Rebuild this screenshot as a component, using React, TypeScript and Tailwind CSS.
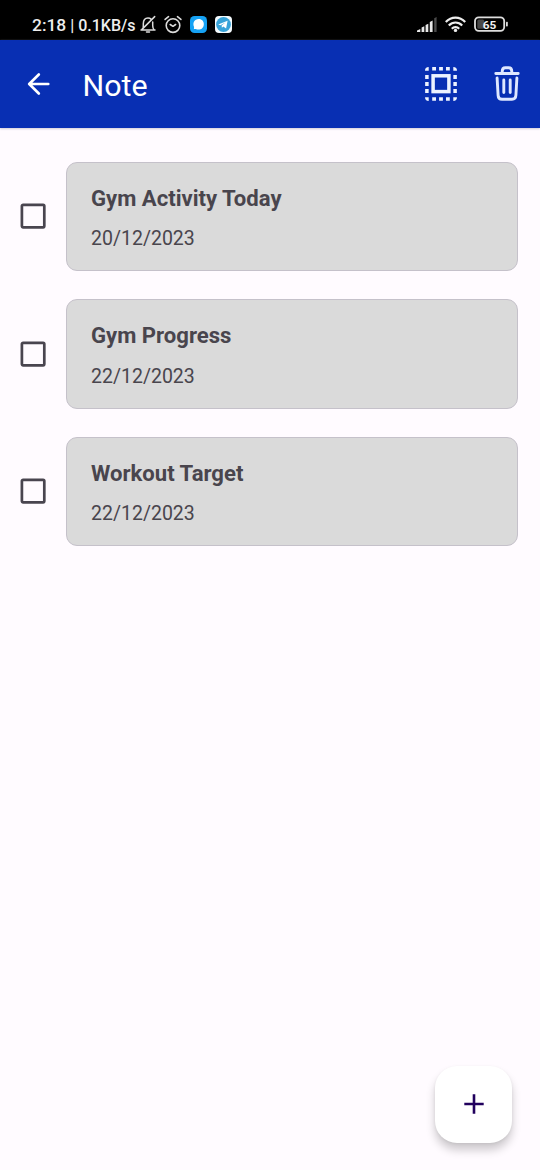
import React from "react";

const notes = [
  { title: "Gym Activity Today", date: "20/12/2023" },
  { title: "Gym Progress", date: "22/12/2023" },
  { title: "Workout Target", date: "22/12/2023" },
];

function MutedBell() {
  return (
    <svg className="ml-[5px] h-5 w-4 shrink-0" viewBox="0 0 16 20" fill="none" stroke="#dcdcdc" strokeWidth="1.5" strokeLinecap="round" strokeLinejoin="round">
      <path d="M1 16H15M2.3 16C3.6 14.6 3.3 12.8 3.3 10C3.3 6.3 5.1 4 8 4C9.3 4 10.3 4.4 11 5.1M12.7 8V11.6C12.7 13.9 13 14.9 14.2 16M6.5 18H9.5M14.7 2.6L2 15.4" />
    </svg>
  );
}

function AlarmClock() {
  return (
    <svg className="ml-2 h-5 w-[18px] shrink-0" viewBox="0 0 18 20" fill="none" stroke="#dcdcdc" strokeWidth="1.6" strokeLinecap="round" strokeLinejoin="round">
      <circle cx="9" cy="11.6" r="6.8" />
      <path d="M1.1 5.4L4.5 2.7M13.5 2.7L16.9 5.4M6.2 10.5L9 12.3L11.6 10.5" />
    </svg>
  );
}

function ChatBadge() {
  return (
    <svg className="ml-[7.5px] mt-px h-[17px] w-[17px] shrink-0" viewBox="0 0 17 17">
      <rect width="17" height="17" rx="4.5" fill="#16a2f4" />
      <path d="M8.7 3C12 3 14 5.5 13.8 8.4C13.6 11.6 11.4 13.6 8.5 13.6C7.4 13.6 6.6 13.4 5.9 12.9L3.9 13.1L4.1 11C2.2 7 4.4 3 8.7 3Z" fill="#fff" />
    </svg>
  );
}

function TelegramBadge() {
  return (
    <svg className="ml-2 mt-px h-[17px] w-[17px] shrink-0" viewBox="0 0 17 17">
      <rect width="17" height="17" rx="4" fill="#f4fafd" />
      <circle cx="8.5" cy="8.5" r="7.4" fill="#36a3d9" />
      <path d="M3.2 8.4L12.6 4.7L11.1 12.4L8.3 10.5L6.9 11.8L6.6 9.5L10.7 6.2L5.5 9.2Z" fill="#fff" />
    </svg>
  );
}

function Signal() {
  return (
    <svg className="h-5 w-5 shrink-0" viewBox="0 0 20 20">
      <path d="M0 16.4L3.3 14.9V18H0ZM4.6 13.6L7.3 12.3V18H4.6ZM8.6 11L11.3 9.7V18H8.6ZM12.8 8L15.6 6.6V18H12.8Z" fill="#e8e8e8" />
      <path d="M17.2 4.2L19.6 3V18H17.2Z" fill="#4b4b4b" />
    </svg>
  );
}

function Wifi() {
  return (
    <svg className="ml-2 h-5 w-[21px] shrink-0" viewBox="0 0 21 20" fill="none" stroke="#eee" strokeWidth="2.2">
      <path d="M.8 8C6.3 2.1 14.7 2.1 20.2 8M3.8 11.5C7.7 7.5 13.3 7.5 17.2 11.5M6.8 14.8C8.9 12.6 12.1 12.6 14.2 14.8" />
      <circle cx="10.5" cy="16.4" r="1.7" fill="#eee" stroke="none" />
    </svg>
  );
}

function Battery() {
  return (
    <svg className="ml-2 h-5 w-[34px] shrink-0" viewBox="0 0 34 20">
      <rect x="1" y="3.3" width="29.2" height="13.6" rx="3.8" fill="#000" stroke="#dedede" strokeWidth="1.8" />
      <rect x="3.3" y="5.4" width="7" height="9.4" rx="1.5" fill="#484848" />
      <rect x="32" y="7.8" width="1.8" height="4.6" rx=".7" fill="#dedede" />
      <text x="15.6" y="14.5" textAnchor="middle" fill="#f2f2f2" className="text-[11.8px] font-bold">65</text>
    </svg>
  );
}

function SelectAll() {
  return (
    <svg className="h-[34px] w-8" viewBox="0 0 32 34" fill="none" stroke="#edf3ff">
      <rect x="8.1" y="8.8" width="15.8" height="15.8" strokeWidth="3.5" />
      <path d="M7.2 1.7H24.8M7.2 32.1H24.8" strokeWidth="3.5" strokeDasharray="3.8 3.1" />
      <path d="M1.9 8.1V26M30.1 8.1V26" strokeWidth="3.5" strokeDasharray="3.8 3.2" />
      <path d="M0 3.7Q0 0 3.7 0V3.7ZM28.3 0Q32 0 32 3.7H28.3ZM0 30.3H3.7V34Q0 34 0 30.3ZM28.3 30.3H32Q32 34 28.3 34Z" fill="#edf3ff" stroke="none" />
    </svg>
  );
}

function Trash() {
  return (
    <svg className="-mt-0.5 h-[35px] w-[26px]" viewBox="0 0 26 35" fill="none" stroke="#dfe8ff" strokeWidth="2.9" strokeLinecap="round" strokeLinejoin="round">
      <path d="M1.8 7.5H24.2M8.2 6.9V5.5Q8.2 1.8 11.4 1.8H14.6Q17.8 1.8 17.8 5.5V6.9M3.1 12L4.1 29.3Q4.3 33.2 8 33.2H18Q21.7 33.2 21.9 29.3L22.9 12" />
      <path d="M9.8 14V26.5M16.2 14V26.5" />
    </svg>
  );
}

function NoteRow({ title, date }: { title: string; date: string }) {
  return (
    <li className="flex items-center">
      <button aria-label={`Select ${title}`} className="h-[26px] w-[26px] shrink-0">
        <svg className="h-[26px] w-[26px]" viewBox="0 0 26 26" fill="none">
          <rect x="1.9" y="1.9" width="22.4" height="22.4" rx="1.2" stroke="#49454f" strokeWidth="2.7" />
        </svg>
      </button>
      <article className="ml-5 h-[109.5px] flex-1 rounded-[11px] border-[1.5px] border-[#c5c1ca] bg-[#dadada] pt-[21px] pl-6 text-[#49454d]">
        <h2 className="text-[22.1px] leading-7 font-bold">{title}</h2>
        <p className="mt-[13.5px] text-[19.5px] leading-7">{date}</p>
      </article>
    </li>
  );
}

export default function App() {
  return (
    <div className="flex h-[1170px] w-[540px] flex-col overflow-hidden bg-[#fffbff] font-['Roboto',sans-serif]">
      <div className="flex h-10 shrink-0 items-center bg-black pt-2 pr-8 pl-8 text-[#eee]">
        <div className="flex w-[103px] items-baseline pt-[2px] text-[17.4px] leading-5 font-medium whitespace-pre">
          <span>2:18</span>
          <span className="ml-[4px] text-[16px]">| 0.1KB/s</span>
        </div>
        <MutedBell />
        <AlarmClock />
        <ChatBadge />
        <TelegramBadge />
        <div className="ml-auto flex items-center">
          <Signal />
          <Wifi />
          <Battery />
        </div>
      </div>
      <header className="flex h-22 shrink-0 items-center bg-[#082fb3] pr-5 pl-[27px] text-white shadow-[0_1px_2px_#d0ccd8]">
        <svg className="h-[22px] w-[23px]" viewBox="0 0 23 22" fill="none" stroke="currentColor" strokeWidth="2.6" strokeLinecap="round" strokeLinejoin="round">
          <path d="M11.8 1.5L2.2 11L11.8 20.5M2.5 11H21.3" />
        </svg>
        <h1 className="ml-[32.5px] pt-[3px] text-[30.4px] leading-9">Note</h1>
        <div className="ml-auto flex items-center gap-[37px]">
          <SelectAll />
          <Trash />
        </div>
      </header>
      <main className="flex flex-1 flex-col justify-between">
        <ul className="flex flex-col gap-7 pt-[33.5px] pr-[22px] pl-5">
          {notes.map((note) => <NoteRow key={note.title} {...note} />)}
        </ul>
        <button aria-label="Add note" className="mr-7 mb-[27.5px] flex h-[77px] w-[77px] items-center justify-center self-end rounded-[22px] bg-white shadow-[0_7px_10px_#00000033,0_1px_3px_#00000010]">
          <svg className="h-5 w-5" viewBox="0 0 20 20" stroke="#21005d" strokeWidth="2.6">
            <path d="M10 .3V19.7M.3 10H19.7" />
          </svg>
        </button>
      </main>
    </div>
  );
}
